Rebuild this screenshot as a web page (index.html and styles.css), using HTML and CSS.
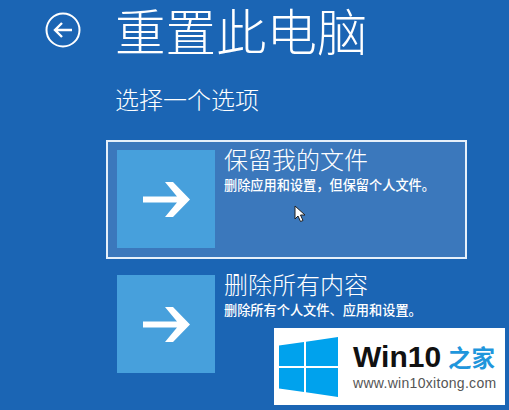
FILE: index.html
```html
<!DOCTYPE html>
<html lang="zh-CN">
<head>
<meta charset="utf-8">
<title>重置此电脑</title>
<link rel="stylesheet" href="styles.css">
</head>
<body>
<main class="screen">
  <header class="head">
    <svg class="back" viewBox="0 0 36 36" width="36" height="36" aria-hidden="true">
      <circle cx="18" cy="18" r="16.5" fill="none" stroke="#fff" stroke-width="2"/>
      <path d="M27 18H10M17 11l-7 7 7 7" fill="none" stroke="#fff" stroke-width="2.4"/>
    </svg>
    <h1 class="title">重置此电脑</h1>
  </header>
  <p class="subtitle">选择一个选项</p>
  <section class="option option-active">
    <div class="tile">
      <svg viewBox="0 0 47 35" width="47" height="35" aria-hidden="true"><path d="M0 14.500H34L22 0H30L47 17.500 30 35H22L34 20.500H0z" fill="#fff"/></svg>
    </div>
    <div class="text">
      <h2 class="opt-title">保留我的文件</h2>
      <p class="opt-desc">删除应用和设置，但保留个人文件。</p>
    </div>
  </section>
  <section class="option">
    <div class="tile">
      <svg viewBox="0 0 47 35" width="47" height="35" aria-hidden="true"><path d="M0 14.500H34L22 0H30L47 17.500 30 35H22L34 20.500H0z" fill="#fff"/></svg>
    </div>
    <div class="text">
      <h2 class="opt-title">删除所有内容</h2>
      <p class="opt-desc">删除所有个人文件、应用和设置。</p>
    </div>
  </section>
</main>
<svg class="cursor" viewBox="0 0 12 18" width="12" height="18" aria-hidden="true"><path d="M1 1v13l3-3 2.500 5.500 2.500-1L6.500 10H11z" fill="#fff" stroke="#222" stroke-width="1"/></svg>
<aside class="badge">
  <svg class="winlogo" viewBox="0 0 60 60" width="60" height="60" aria-hidden="true">
    <path d="M0 8.500 25 5V29H0zM27 4.700 59 0V29H27zM0 31H25V55L0 51.500zM27 31H59V60L27 55.300z" fill="#00a2ed"/>
  </svg>
  <div class="brand">
    <div class="brand-name">Win10<span class="brand-cn">之家</span></div>
    <div class="brand-url">www.win10xitong.com</div>
  </div>
</aside>
</body>
</html>
```
FILE: styles.css
```css
* { box-sizing: border-box; }
html, body { margin: 0; padding: 0; }
body {
  width: 509px;
  height: 410px;
  overflow: hidden;
  background: #1b65b4;
  color: #fff;
  font-family: "Noto Sans CJK SC", "Noto Sans", sans-serif;
  position: relative;
}
.screen { padding: 0 0 0 45px; }
.head { display: flex; align-items: center; height: 60px; }
.back { flex: none; margin-right: 34px; }
.title { margin: -2px 0 0; font-size: 50.500px; font-weight: 300; line-height: 60px; white-space: nowrap; }
.subtitle { margin: 24px 0 0 70px; font-size: 24px; font-weight: 300; line-height: 30px; }
.option { display: flex; width: 361px; height: 119px; margin: 26px 0 0 61px; padding: 8px 9px; border: 2px solid transparent; }
.option + .option { margin-top: 6px; }
.option-active { background: #3b78bc; border-color: #e6f0fa; }
.tile { flex: none; width: 98px; height: 98px; background: #47a0dc; display: flex; align-items: center; justify-content: center; }
.text { margin-left: 9px; }
.opt-title { margin: -6px 0 0; font-size: 24px; font-weight: 300; line-height: 30px; white-space: nowrap; }
.opt-desc { margin: 4px 0 0; font-size: 13.200px; font-weight: 500; line-height: 14px; white-space: nowrap; }
.cursor { position: absolute; left: 294px; top: 205px; }
.badge { position: absolute; left: 274px; top: 328px; width: 231px; height: 77px; background: #fff; display: flex; align-items: center; padding-left: 5px; }
.winlogo { flex: none; margin-right: 14px; }
.brand-name { font-family: "Liberation Sans", sans-serif; font-size: 30px; font-weight: 700; color: #111; line-height: 30px; white-space: nowrap; }
.brand-cn { font-family: "Noto Sans CJK SC", sans-serif; color: #1f96dc; font-size: 23.500px; font-weight: 700; margin-left: 7px; }
.brand-url { font-family: "Liberation Sans", sans-serif; font-size: 14px; color: #555; line-height: 16px; letter-spacing: 0.300px; white-space: nowrap; margin-top: 3px; }
```
